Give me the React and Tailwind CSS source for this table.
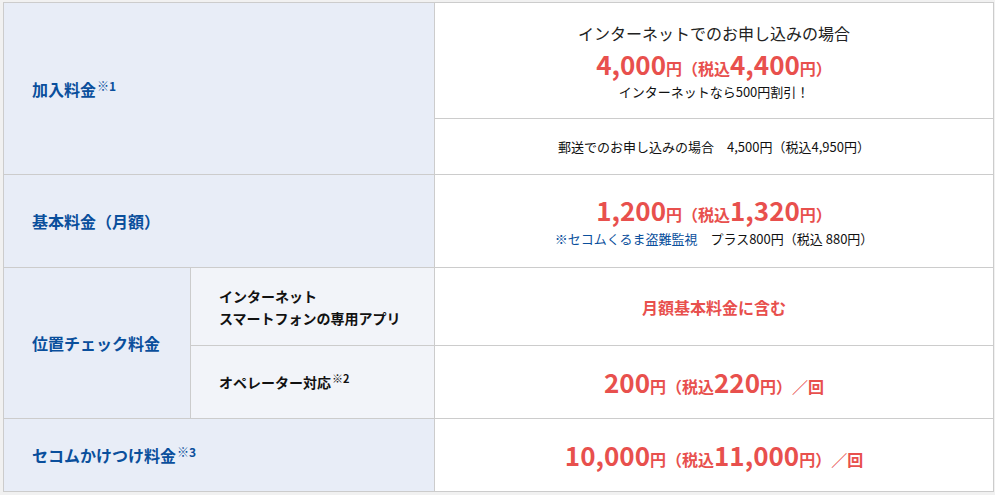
export default function App() {
  const th = "border border-[#cccccc] bg-[#e8edf7] text-left align-middle pl-[28px] text-[16px] font-bold text-[#0a4f9c]";
  const sub = "border border-[#cccccc] bg-[#f2f4f9] text-left align-middle pl-[28px] text-[14px] font-bold text-[#111]";
  const td = "border border-[#cccccc] bg-white text-center align-middle";
  const mark = "text-[12px] font-bold align-[5px] leading-none ml-[1px]";

  const Price = ({ a, b, per }) => (
    <div className="text-[#e8504d] font-bold leading-none">
      <span className="text-[26px]">{a}</span>
      <span className="text-[16px]">円（税込</span>
      <span className="text-[26px]">{b}</span>
      <span className="text-[16px]">円）</span>
      {per && <span className="text-[16px]">／回</span>}
    </div>
  );

  return (
    <div
      className="min-h-screen w-[995px] h-[495px] bg-[#f1f1f1] pt-[2px] pl-[3px]"
      style={{ fontFamily: '"Noto Sans CJK JP", "Noto Sans", sans-serif' }}
    >
      <table className="w-[991px] border-collapse table-fixed">
        <colgroup>
          <col className="w-[187px]" />
          <col className="w-[244px]" />
          <col />
        </colgroup>
        <tbody>
          <tr className="h-[116px]">
            <th rowSpan={2} colSpan={2} className={th}>
              加入料金<span className={mark}>※1</span>
            </th>
            <td className={td}>
              <div className="text-[16px] text-[#222] leading-none mt-[2px]">インターネットでのお申し込みの場合</div>
              <div className="mt-[10px]">
                <Price a="4,000" b="4,400" />
              </div>
              <div className="text-[13px] text-[#111] leading-none mt-[8px]">インターネットなら500円割引！</div>
            </td>
          </tr>
          <tr className="h-[56px]">
            <td className={`${td} text-[13px] text-[#111]`}>
              郵送でのお申し込みの場合　4,500円（税込4,950円）
            </td>
          </tr>
          <tr className="h-[93px]">
            <th colSpan={2} className={th}>基本料金（月額）</th>
            <td className={td}>
              <Price a="1,200" b="1,320" />
              <div className="text-[13px] leading-none mt-[9px]">
                <span className="text-[#0a4f9c]">※セコムくるま盗難監視</span>
                <span className="text-[#111]">　プラス800円（税込 880円）</span>
              </div>
            </td>
          </tr>
          <tr className="h-[78px]">
            <th rowSpan={2} className={th}>位置チェック料金</th>
            <th className={`${sub} leading-[22px]`}>
              インターネット
              <br />
              スマートフォンの専用アプリ
            </th>
            <td className={`${td} text-[16px] font-bold text-[#e8504d]`}>月額基本料金に含む</td>
          </tr>
          <tr className="h-[73px]">
            <th className={sub}>
              オペレーター対応<span className="text-[11px] font-bold align-[5px] leading-none ml-[1px]">※2</span>
            </th>
            <td className={td}>
              <Price a="200" b="220" per />
            </td>
          </tr>
          <tr className="h-[73px]">
            <th colSpan={2} className={th}>
              セコムかけつけ料金<span className={mark}>※3</span>
            </th>
            <td className={td}>
              <Price a="10,000" b="11,000" per />
            </td>
          </tr>
        </tbody>
      </table>
    </div>
  );
}
